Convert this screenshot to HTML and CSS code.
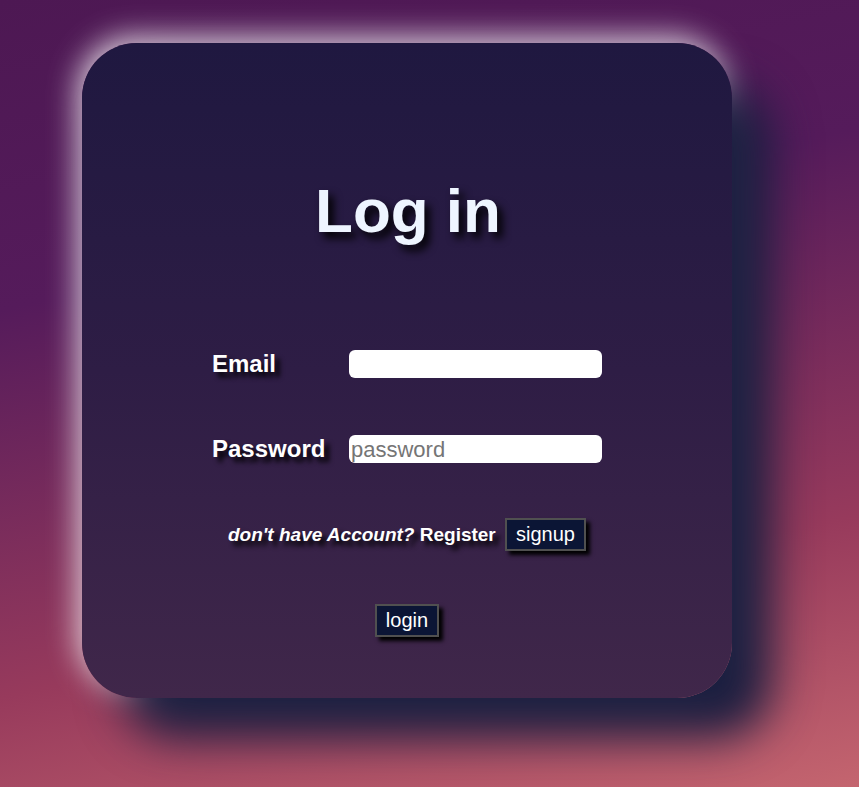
FILE: index.html
```html
<!DOCTYPE html>
<html lang="en">
<head>
<meta charset="utf-8">
<title>Log in</title>
<link rel="stylesheet" href="styles.css">
</head>
<body>
<main class="page">
  <section class="card">
    <h1 class="title">Log in</h1>
    <form class="form">
      <label class="label" for="email">Email</label>
      <input class="field" id="email" type="email">
      <label class="label" for="password">Password</label>
      <input class="field" id="password" type="password" placeholder="password">
    </form>
    <p class="register"><em>don't have Account?</em> Register <button class="btn" type="button">signup</button></p>
    <button class="btn" type="button">login</button>
  </section>
</main>
</body>
</html>
```

FILE: styles.css
```css
html, body {
  margin: 0;
  padding: 0;
}
body {
  font-family: "Liberation Sans", Arial, sans-serif;
  background: linear-gradient(168deg, #4d1853 0%, #551b5b 32%, #973a5c 72%, #c4656f 100%);
  min-height: 787px;
}
.page {
  padding: 43px 0 0 82px;
}
.card {
  box-sizing: border-box;
  width: 650px;
  height: 655px;
  border-radius: 55px;
  background: linear-gradient(to bottom, #1f1840 0%, #2e1d45 50%, #40274a 100%);
  box-shadow: 40px 40px 45px #1b1f40, -4px -6px 30px rgba(255, 255, 255, 0.8);
  display: flex;
  flex-direction: column;
  align-items: center;
  padding-top: 131px;
  color: #fff;
}
.title {
  margin: 0 0 0 2px;
  font-size: 62px;
  line-height: 74px;
  font-weight: bold;
  color: #eef5ff;
  text-shadow: 5px 6px 8px #000;
}
.form {
  margin: 102px 0 0;
  display: grid;
  grid-template-columns: 137px 253px;
  row-gap: 57px;
  align-items: center;
}
.label {
  font-size: 24px;
  line-height: 28px;
  font-weight: bold;
  color: #fff;
  text-shadow: 5px 5px 5px #000;
}
.field {
  box-sizing: border-box;
  width: 253px;
  height: 28px;
  border: none;
  border-radius: 6px;
  background: #fff;
  padding: 1px 2px 0 2px;
  font-family: "Liberation Sans", Arial, sans-serif;
  font-size: 22px;
  color: #000;
}
.field::placeholder {
  color: #757575;
}
.register {
  margin: 55px 0 0;
  font-size: 19px;
  font-weight: bold;
  color: #fff;
  text-shadow: 5px 5px 5px #000;
  line-height: 33px;
}
.register .btn {
  margin-left: 4px;
  vertical-align: baseline;
}
.btn {
  font-family: "Liberation Sans", Arial, sans-serif;
  font-size: 20px;
  line-height: 23px;
  font-weight: normal;
  color: #fff;
  background: #0b1535;
  border: 2px solid #505050;
  padding: 3px 9px;
  box-shadow: 4px 4px 4px #000;
  text-shadow: none;
  cursor: pointer;
}
.card > .btn {
  margin-top: 53px;
}
```
